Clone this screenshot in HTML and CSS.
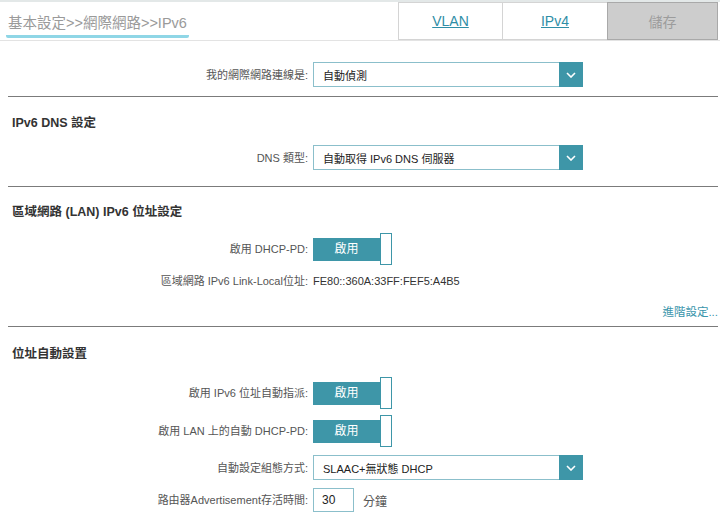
FILE: index.html
```html
<!DOCTYPE html>
<html lang="zh-Hant">
<head>
  <meta charset="UTF-8">
  <title>IPv6</title>
  <link rel="stylesheet" href="styles.css">
</head>
<body>

  <header class="topbar">
    <div class="crumb"><span class="crumb-text">基本設定&gt;&gt;網際網路&gt;&gt;IPv6</span></div>
    <nav class="tabs">
      <a class="tab" href="#">VLAN</a>
      <a class="tab tab-wide" href="#">IPv4</a>
      <span class="tab tab-save">儲存</span>
    </nav>
  </header>

  <main class="content">
    <div class="row row-first">
      <label class="label">我的網際網路連線是:</label>
      <div class="select">
        <span class="select-text">自動偵測</span>
        <span class="select-arrow"><svg width="10" height="6" viewBox="0 0 10 6"><polyline points="1,1 5,5 9,1" fill="none" stroke="#fff" stroke-width="1.6"/></svg></span>
      </div>
    </div>

    <hr class="divider">

    <h3 class="section-title">IPv6 DNS 設定</h3>
    <div class="row row-after-title">
      <label class="label">DNS 類型:</label>
      <div class="select">
        <span class="select-text">自動取得 IPv6 DNS 伺服器</span>
        <span class="select-arrow"><svg width="10" height="6" viewBox="0 0 10 6"><polyline points="1,1 5,5 9,1" fill="none" stroke="#fff" stroke-width="1.6"/></svg></span>
      </div>
    </div>

    <hr class="divider divider-dns">

    <h3 class="section-title title-lan">區域網路 (LAN) IPv6 位址設定</h3>
    <div class="row row-toggle-first">
      <label class="label">啟用 DHCP-PD:</label>
      <div class="toggle"><span class="toggle-on">啟用</span><span class="toggle-knob"></span></div>
    </div>
    <div class="row row-text">
      <label class="label">區域網路 IPv6 Link-Local位址:</label>
      <span class="value">FE80::360A:33FF:FEF5:A4B5</span>
    </div>
    <div class="advanced"><a href="#">進階設定...</a></div>

    <hr class="divider divider-lan">

    <h3 class="section-title title-auto">位址自動設置</h3>
    <div class="row row-toggle-a">
      <label class="label">啟用 IPv6 位址自動指派:</label>
      <div class="toggle"><span class="toggle-on">啟用</span><span class="toggle-knob"></span></div>
    </div>
    <div class="row row-toggle-b">
      <label class="label">啟用 LAN 上的自動 DHCP-PD:</label>
      <div class="toggle"><span class="toggle-on">啟用</span><span class="toggle-knob"></span></div>
    </div>
    <div class="row row-tight">
      <label class="label">自動設定組態方式:</label>
      <div class="select">
        <span class="select-text">SLAAC+無狀態 DHCP</span>
        <span class="select-arrow"><svg width="10" height="6" viewBox="0 0 10 6"><polyline points="1,1 5,5 9,1" fill="none" stroke="#fff" stroke-width="1.6"/></svg></span>
      </div>
    </div>
    <div class="row row-tight">
      <label class="label">路由器Advertisement存活時間:</label>
      <div class="with-unit">
        <input class="num-input" type="text" value="30">
        <span class="unit">分鐘</span>
      </div>
    </div>
  </main>

</body>
</html>
```

FILE: styles.css
```css
body {
  margin: 0;
  font-family: "Liberation Sans", Arial, "Noto Sans CJK TC", sans-serif;
  font-size: 11px;
  color: #555;
  background: #fff;
}
.topbar {
  display: flex;
  height: 38px;
  border-top: 2px solid #e3e8e8;
  border-bottom: 1px solid #e3e3e3;
}
.crumb {
  flex: 1;
  padding-left: 6px;
}
.crumb-text {
  display: inline-block;
  padding: 9px 2px 3px;
  font-size: 14.5px;
  color: #9a9a9a;
  border-bottom: 3px solid #8fd6e6;
  border-radius: 2px;
}
.tabs {
  display: flex;
  margin-right: 2px;
}
.tab {
  box-sizing: border-box;
  width: 104px;
  height: 38px;
  border: 1px solid #d4d4d4;
  border-right: none;
  display: flex;
  align-items: center;
  justify-content: center;
  font-size: 14px;
  color: #2f8ea6;
  text-decoration: underline;
}
.tab-wide {
  width: 105px;
}
.tab-save {
  width: 111px;
  background: #cdcdcd;
  border: 1px solid #a9a9a9;
  color: #9c9c9c;
  text-decoration: none;
}
.content {
  display: flex;
  flex-direction: column;
}
.row {
  display: grid;
  grid-template-columns: 308px auto;
  column-gap: 5px;
  align-items: center;
  justify-items: start;
}
.label {
  justify-self: end;
  color: #555;
  line-height: 16px;
}
.row-first { margin-top: 21px; }
.row-after-title { margin-top: 14px; }
.row-toggle-first { margin-top: 13px; }
.row-text { margin-top: 8px; }
.row-toggle-a { margin-top: 15px; }
.row-toggle-b { margin-top: 6px; }
.row-tight { margin-top: 8px; }
.divider {
  width: 710px;
  margin: 9px 0 0 8px;
  border: none;
  border-top: 1px solid #7b7b7b;
  height: 0;
}
.divider-dns { margin-top: 16px; }
.divider-lan { margin-top: 6px; }
.section-title {
  margin: 18px 0 0 12px;
  font-size: 12.5px;
  line-height: 16px;
  color: #333;
}
.title-lan { margin-top: 17px; }
.title-auto { margin-top: 19px; }
.select {
  box-sizing: border-box;
  width: 270px;
  height: 25px;
  display: flex;
  align-items: center;
  border: 1px solid #8bbfcb;
  background: #fff;
}
.select-text {
  flex: 1;
  padding-left: 9px;
  color: #222;
}
.select-arrow {
  width: 24px;
  align-self: stretch;
  margin: -1px -1px -1px 0;
  background: #3e96a8;
  display: flex;
  align-items: center;
  justify-content: center;
}
.toggle {
  display: flex;
  align-items: center;
}
.toggle-on {
  width: 67px;
  height: 23px;
  line-height: 23px;
  text-align: center;
  font-size: 12px;
  background: #3e96a8;
  color: #fff;
}
.toggle-knob {
  box-sizing: border-box;
  width: 12px;
  height: 32px;
  border: 1px solid #3e96a8;
  background: #fff;
}
.value {
  color: #333;
  line-height: 16px;
}
.advanced {
  margin-top: 15px;
  padding-right: 2px;
  text-align: right;
  line-height: 16px;
  font-size: 11.5px;
}
.advanced a {
  color: #3a95ab;
  text-decoration: none;
}
.with-unit {
  display: flex;
  align-items: center;
  gap: 9px;
}
.num-input {
  box-sizing: border-box;
  width: 41px;
  height: 24px;
  padding: 0 0 0 8px;
  border: 1px solid #8bbfcb;
  font-family: inherit;
  font-size: 12px;
  color: #222;
}
.unit {
  color: #555;
  font-size: 12px;
}
```
